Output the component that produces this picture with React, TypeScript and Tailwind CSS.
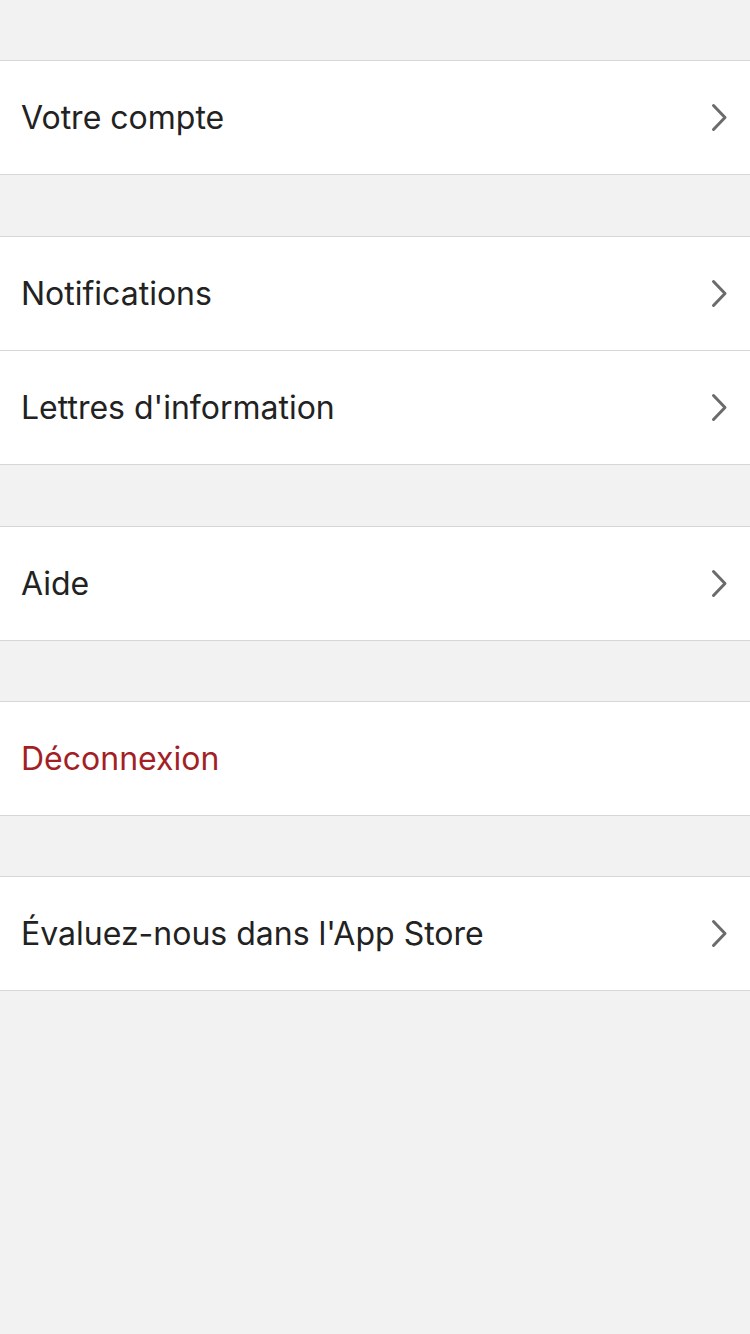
import React from "react";

const Chevron = () => (
  <svg width="17" height="29" viewBox="0 0 17 29" className="shrink-0">
    <path d="M2.5 2.5 L14 14.5 L2.5 26.5" fill="none" stroke="#6b6b6b" strokeWidth="3" strokeLinecap="round" strokeLinejoin="round" />
  </svg>
);

type Item = { label: string; red?: boolean; chevron?: boolean };

const Row = ({ item }: { item: Item }) => (
  <div className="box-content flex h-[113px] items-center justify-between bg-white pl-[21px] pr-[22px]">
    <span className={`text-[32px] ${item.red ? "text-[#a31f26]" : "text-[#222222]"}`}>{item.label}</span>
    {item.chevron !== false && <Chevron />}
  </div>
);

const Section = ({ items, className }: { items: Item[]; className: string }) => (
  <div className={`divide-y divide-[#d6d6d6] border-y border-[#d6d6d6] bg-white ${className}`}>
    {items.map((it) => (
      <Row key={it.label} item={it} />
    ))}
  </div>
);

export default function App() {
  return (
    <div className="flex min-h-[1334px] w-[750px] flex-col bg-[#f2f2f2] pt-[60px]" style={{ fontFamily: "Inter, 'Noto Sans', sans-serif" }}>
      <Section className="" items={[{ label: "Votre compte" }]} />
      <Section className="mt-[61px]" items={[{ label: "Notifications" }, { label: "Lettres d'information" }]} />
      <Section className="mt-[61px]" items={[{ label: "Aide" }]} />
      <Section className="mt-[60px]" items={[{ label: "Déconnexion", red: true, chevron: false }]} />
      <Section className="mt-[60px]" items={[{ label: "Évaluez-nous dans l'App Store" }]} />
    </div>
  );
}
